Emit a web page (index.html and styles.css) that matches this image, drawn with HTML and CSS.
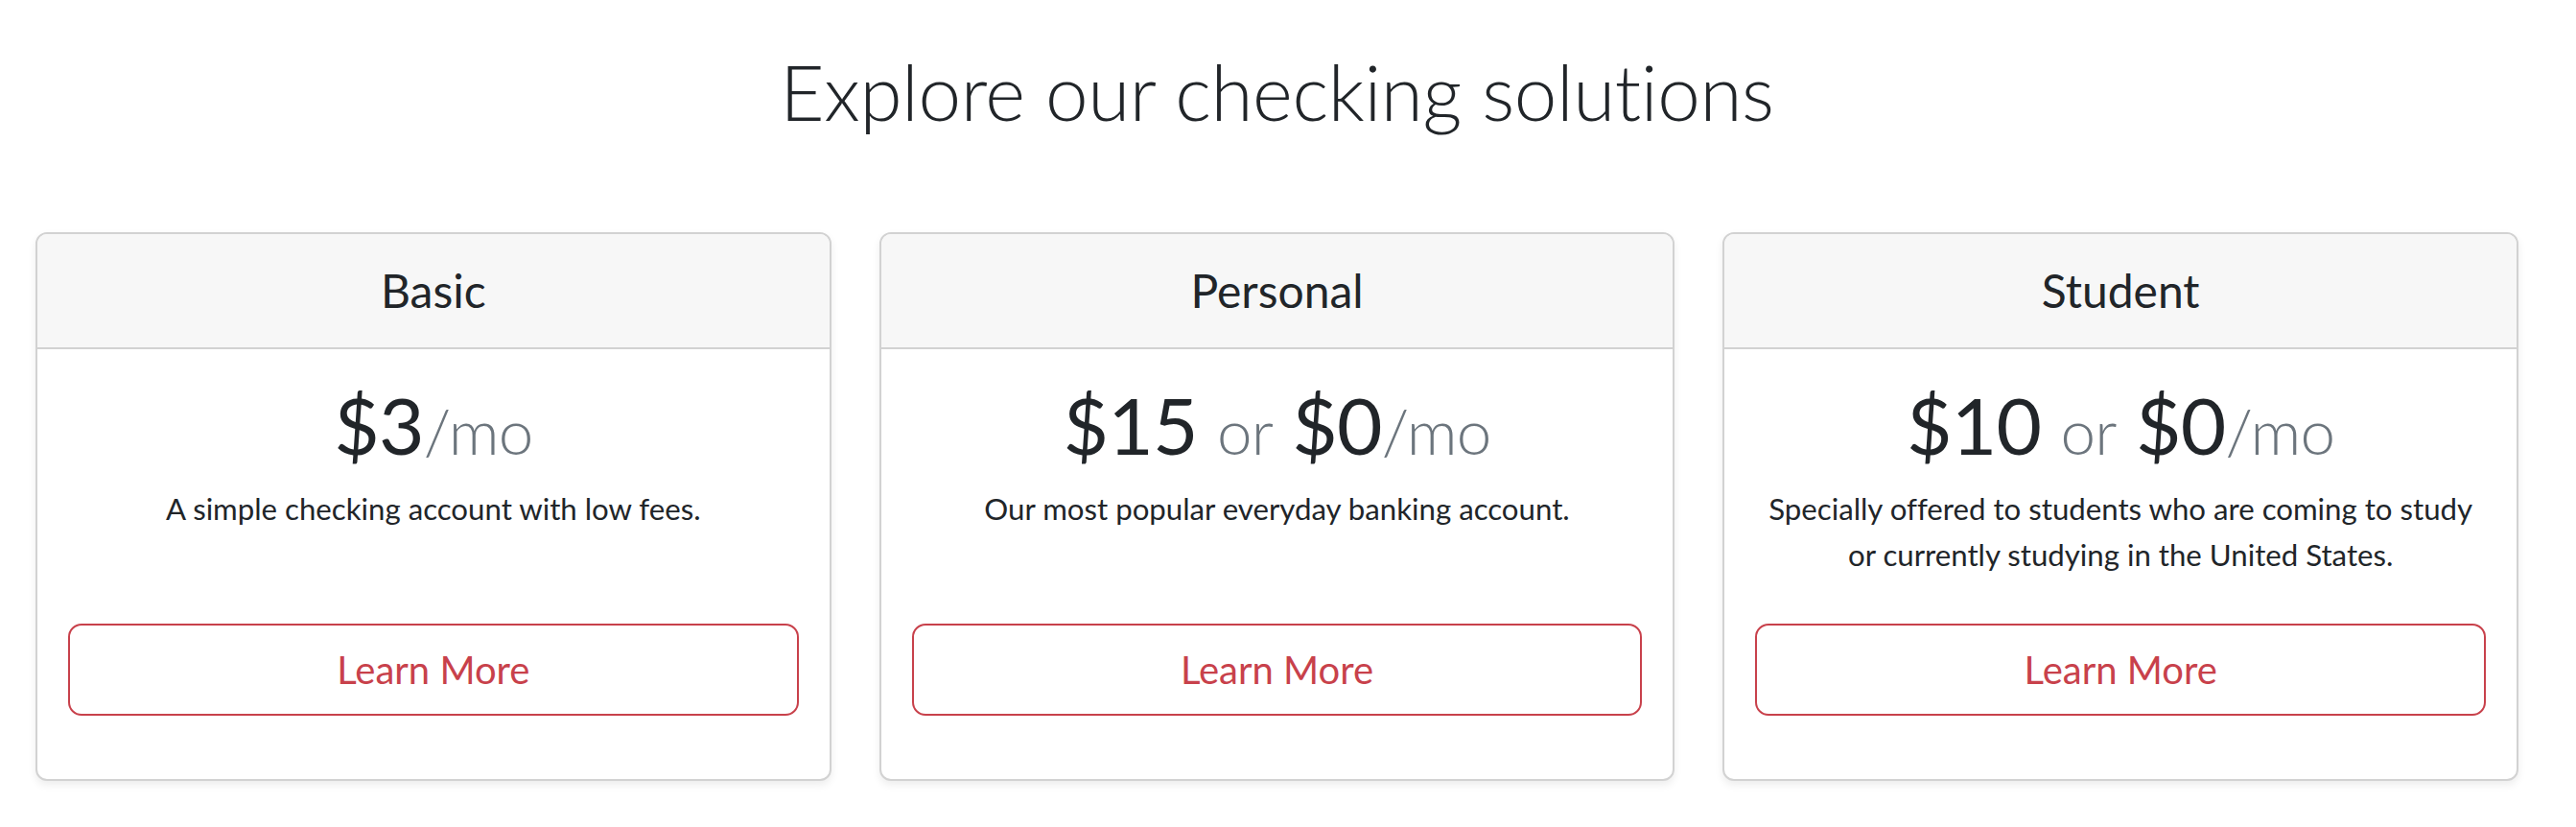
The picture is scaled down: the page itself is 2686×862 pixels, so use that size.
FILE: index.html
```html
<!DOCTYPE html>
<html lang="en">
<head>
<meta charset="utf-8">
<title>Explore our checking solutions</title>
<link rel="stylesheet" href="styles.css">
</head>
<body>
<main class="page">
  <h1 class="page-title">Explore our checking solutions</h1>
  <div class="deck">
    <section class="card">
      <header class="card-header"><h4 class="card-name">Basic</h4></header>
      <div class="card-body">
        <h2 class="price">$3<small class="muted">/mo</small></h2>
        <p class="desc">A simple checking account with low fees.</p>
        <a class="btn" href="#">Learn More</a>
      </div>
    </section>
    <section class="card">
      <header class="card-header"><h4 class="card-name">Personal</h4></header>
      <div class="card-body">
        <h2 class="price">$15 <small class="muted">or</small> $0<small class="muted">/mo</small></h2>
        <p class="desc">Our most popular everyday banking account.</p>
        <a class="btn" href="#">Learn More</a>
      </div>
    </section>
    <section class="card">
      <header class="card-header"><h4 class="card-name">Student</h4></header>
      <div class="card-body">
        <h2 class="price">$10 <small class="muted">or</small> $0<small class="muted">/mo</small></h2>
        <p class="desc">Specially offered to students who are coming to study or currently studying in the United States.</p>
        <a class="btn" href="#">Learn More</a>
      </div>
    </section>
  </div>
</main>
</body>
</html>
```

FILE: styles.css
```css
* { box-sizing: border-box; }

html, body {
  margin: 0;
  padding: 0;
  background: #ffffff;
}

body {
  font-family: Lato, "Open Sans", "Liberation Sans", sans-serif;
  color: #212529;
  font-variant-ligatures: none;
}

.page {
  padding: 47px 60px 40px 37px;
}

.page-title {
  margin: 0 0 99px;
  font-size: 80px;
  font-weight: 300;
  letter-spacing: -0.4px;
  line-height: 1.2;
  text-align: center;
  color: #212529;
}

.deck {
  display: flex;
  gap: 50px;
  align-items: stretch;
}

.card {
  flex: 1 1 0;
  display: flex;
  flex-direction: column;
  background: #fff;
  border: 2px solid #d2d2d2;
  border-radius: 12px;
  box-shadow: 0 4px 8px rgba(0, 0, 0, 0.075);
  overflow: hidden;
}

.card-header {
  background: #f7f7f7;
  border-bottom: 2px solid #d2d2d2;
  padding: 30px 32px;
  text-align: center;
}

.card-name {
  margin: 0;
  font-size: 48px;
  font-weight: 400;
  line-height: 1.2;
}

.card-body {
  flex: 1 1 auto;
  display: flex;
  flex-direction: column;
  align-items: stretch;
  padding: 29px 32px 66px;
  text-align: center;
}

.price {
  margin: 0 0 15px;
  font-size: 82px;
  font-weight: 400;
  letter-spacing: -0.8px;
  line-height: 1.2;
}

.muted {
  font-size: 80%;
  font-weight: 300;
  color: #6c757d;
}

.desc {
  margin: 0 0 48px;
  font-size: 31.2px;
  line-height: 48px;
}

.btn {
  margin-top: auto;
  display: block;
  padding: 16px 32px;
  border: 2px solid #c8414b;
  border-radius: 14px;
  color: #c8414b;
  font-size: 40px;
  line-height: 1.5;
  text-decoration: none;
  text-align: center;
}
```
